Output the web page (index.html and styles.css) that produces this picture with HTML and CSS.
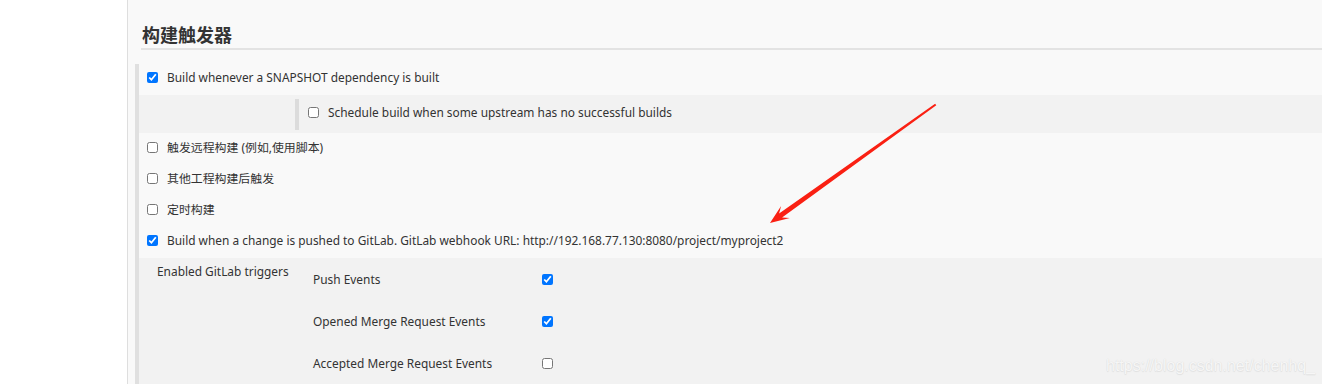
FILE: index.html
```html
<!DOCTYPE html>
<html lang="zh-CN">
<head>
<meta charset="utf-8">
<title>构建触发器</title>
<link rel="stylesheet" href="styles.css">
</head>
<body>
<div class="page">
  <aside class="side"></aside>
  <main class="main">
    <h2 class="title">构建触发器</h2>
    <div class="section">
      <label class="row"><input type="checkbox" checked><span>Build whenever a SNAPSHOT dependency is built</span></label>
      <div class="nested">
        <div class="nested-inner">
          <label class="row"><input type="checkbox"><span>Schedule build when some upstream has no successful builds</span></label>
        </div>
      </div>
      <label class="row"><input type="checkbox"><span>触发远程构建 (例如,使用脚本)</span></label>
      <label class="row"><input type="checkbox"><span>其他工程构建后触发</span></label>
      <label class="row"><input type="checkbox"><span>定时构建</span></label>
      <label class="row"><input type="checkbox" checked><span>Build when a change is pushed to GitLab. GitLab webhook URL: http://192.168.77.130:8080/project/myproject2</span></label>
      <div class="gitlab">
        <div class="gl-label">Enabled GitLab triggers</div>
        <div class="gl-list">
          <label class="gl-item"><span class="gl-name">Push Events</span><input type="checkbox" checked></label>
          <label class="gl-item"><span class="gl-name">Opened Merge Request Events</span><input type="checkbox" checked></label>
          <label class="gl-item"><span class="gl-name">Accepted Merge Request Events</span><input type="checkbox"></label>
        </div>
      </div>
    </div>
  </main>
  <svg class="arrow" width="1322" height="384" viewBox="0 0 1322 384" aria-hidden="true">
    <polygon points="936.3,105.3 782.1,217.5 789.8,218.1 770,223 781.1,205.9 779.1,213.5 935.1,103.8" fill="#fa2013"/>
  </svg>
  <div class="watermark">https://blog.csdn.net/chenhq_</div>
</div>
</body>
</html>
```

FILE: styles.css
```css
* { box-sizing: border-box; }
html, body { margin: 0; padding: 0; }
body {
  font-family: "Noto Sans", "Noto Sans CJK SC", sans-serif;
  font-size: 11.9px;
  color: #333;
  background: #f9f9f9;
}
.page {
  position: relative;
  display: flex;
  width: 1322px;
  height: 384px;
  overflow: hidden;
}
.side {
  width: 128px;
  flex: none;
  background: #fff;
  border-right: 1px solid #dedede;
}
.main {
  flex: 1;
  background: #f9f9f9;
  padding-left: 7px;
}
.title {
  margin: 0 0 14px 6px;
  padding: 22px 0 2px 1px;
  font-family: "Noto Sans CJK SC", sans-serif;
  font-size: 18px;
  font-weight: 700;
  line-height: 24px;
  color: #333;
  border-bottom: 2px solid #e3e3e3;
}
.section {
  border-left: 4px solid #e0e0e0;
}
.row {
  display: flex;
  align-items: center;
  height: 26px;
  padding-left: 8px;
  margin-bottom: 5px;
  gap: 9px;
  line-height: 16px;
  white-space: nowrap;
}
.row input, .gl-item input {
  width: 11px;
  height: 11px;
  margin: 0;
  flex: none;
  accent-color: #0075ff;
}
.nested {
  background: #f2f2f2;
  padding: 4px 0 3px 156px;
  margin-bottom: 1px;
}
.nested-inner {
  border-left: 4px solid #dcdcdc;
  height: 31px;
}
.nested-inner .row {
  margin: 0;
  padding-left: 9px;
}
.gitlab {
  display: flex;
  background: #f2f2f2;
  margin-top: 0;
  padding: 5px 0 20px 18px;
  min-height: 132px;
}
.gl-label {
  width: 156px;
  line-height: 16px;
}
.gl-list {
  display: flex;
  flex-direction: column;
  padding-top: 8px;
}
.gl-item {
  display: flex;
  align-items: center;
  height: 16px;
  margin-bottom: 26px;
}
.gl-name {
  width: 229px;
  line-height: 16px;
}
.arrow {
  position: absolute;
  left: 0;
  top: 0;
  pointer-events: none;
}
.watermark {
  position: absolute;
  left: 1106px;
  top: 356px;
  font-family: "Liberation Sans", sans-serif;
  font-size: 16px;
  line-height: 20px;
  color: #f6f6f6;
  text-shadow: 0 0 1px #d6d6d6, 0 1px 1px #e2e2e2;
  white-space: nowrap;
}
```
